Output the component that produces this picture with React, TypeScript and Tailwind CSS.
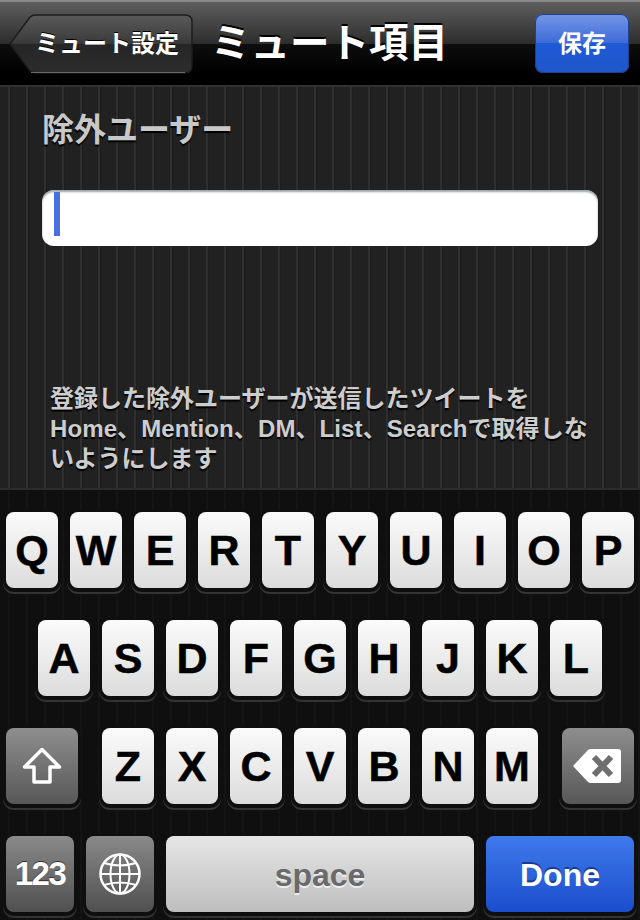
const jp = "font-['Liberation_Sans','Noto_Sans_CJK_JP',sans-serif]";

const rows = [
  { letters: ["Q", "W", "E", "R", "T", "Y", "U", "I", "O", "P"], className: "pl-[6px]" },
  { letters: ["A", "S", "D", "F", "G", "H", "J", "K", "L"], className: "pl-[38px]" },
];

const ledge = "shadow-[0_1px_0_3px_#0f0f0f,0_3px_0_3px_#343434]";

const LetterKey = ({ letter }: { letter: string }) => (
  <div
    className={`flex h-[76px] w-[52px] items-center justify-center rounded-[8px] bg-gradient-to-b from-[#fbfbfb] to-[#dcdcdc] text-[43px] font-bold text-black [-webkit-text-stroke:0.5px_#000] ${ledge}`}
  >
    {letter}
  </div>
);

const BackShape = () => (
  <svg className="absolute inset-0" width="184" height="60" viewBox="0 0 184 60">
    <defs>
      <linearGradient id="back" x1="0" y1="0" x2="0" y2="1">
        <stop offset="0" stopColor="#5a5a5a" />
        <stop offset="0.49" stopColor="#3a3a3a" />
        <stop offset="0.5" stopColor="#262626" />
        <stop offset="1" stopColor="#2c2c2c" />
      </linearGradient>
    </defs>
    <path
      d="M1 30 L21 3 Q23 1 27 1 L176 1 Q183 1 183 8 L183 52 Q183 59 176 59 L27 59 Q23 59 21 57 Z"
      fill="url(#back)"
      stroke="#1c1c1c"
      strokeWidth="1.5"
    />
    <path d="M22 58.5 L176 58.5" stroke="#6a6a6a" strokeWidth="1" />
  </svg>
);

const ShiftIcon = () => (
  <svg width="40" height="38" viewBox="0 0 40 38" fill="none">
    <path
      d="M20 2.5 L37.5 20 L28 20 L28 35 L12 35 L12 20 L2.5 20 Z"
      stroke="#fff"
      strokeWidth="3.5"
      strokeLinejoin="round"
    />
  </svg>
);

const DeleteIcon = () => (
  <svg width="48" height="34" viewBox="0 0 48 34">
    <path d="M0 17 L15 1 Q16 0 18 0 L45 0 Q48 0 48 3 L48 31 Q48 34 45 34 L18 34 Q16 34 15 33 Z" fill="#fff" />
    <path d="M21 8 L38 26 M38 8 L21 26" stroke="#6f6f6f" strokeWidth="6" />
  </svg>
);

const GlobeIcon = () => (
  <svg width="42" height="42" viewBox="0 0 42 42" fill="none" stroke="#fff" strokeWidth="2">
    <circle cx="21" cy="21" r="19.5" strokeWidth="2.5" />
    <ellipse cx="21" cy="21" rx="9.5" ry="19.5" />
    <path d="M21 1.5 V40.5 M1.5 21 H40.5" />
    <path d="M5 10 Q21 15 37 10 M5 32 Q21 27 37 32" />
  </svg>
);

const App = () => {
  return (
    <div className={`flex h-[920px] w-[640px] flex-col overflow-hidden bg-black ${jp}`}>
      {/* nav bar */}
      <div className="flex h-[87px] shrink-0 items-center border-b-2 border-[#333] border-t-2 border-t-[#8a8a8a] bg-[linear-gradient(to_bottom,#5e5e5e_0%,#2d2d2d_50%,#0e0e0e_50%,#000_85%)] pl-[9px] pr-[11px]">
        <div className="relative h-[60px] w-[184px] shrink-0">
          <BackShape />
          <div className="relative flex h-full items-center pl-[26px] text-[24px] font-bold whitespace-nowrap text-white [text-shadow:0_-1px_0_#000]">
            ミュート設定
          </div>
        </div>
        <div className="ml-[18px] text-[39.5px] leading-none font-bold whitespace-nowrap text-white [text-shadow:0_-2px_0_#000]">
          ミュート項目
        </div>
        <div className="ml-auto flex h-[59px] w-[94px] items-center justify-center rounded-[8px] bg-[linear-gradient(to_bottom,#7596e6_0%,#3d6ad8_50%,#1f5ad6_50%,#2056c8_100%)] text-[24px] font-bold text-white shadow-[inset_0_0_0_1px_#1d3f8f]">
          保存
        </div>
      </div>

      {/* form */}
      <div className="flex min-h-0 flex-1 flex-col bg-[#212121] bg-[repeating-linear-gradient(to_right,#212121_0px,#212121_8px,#2f2f2f_8px,#2f2f2f_10px,#1d1d1d_10px,#1d1d1d_11px,#212121_11px,#212121_18px)] pb-[14px]">
        <div className="mt-[25px] ml-[42px] text-[32px] leading-[36px] font-bold text-[#c8c8c8] [text-shadow:0_2px_1px_#000]">
          除外ユーザー
        </div>
        <div className="mt-[42px] ml-[42px] flex h-[56px] w-[556px] items-start rounded-[12px] bg-white pt-[2px] pl-[12px] shadow-[inset_0_2px_2px_#9aa4aa]">
          <div className="h-[44px] w-[6px] bg-[#4a6fe0]" />
        </div>
        <div className="mt-auto ml-[50px] w-[560px] text-[24px] leading-[30px] font-bold text-[#cdcdcd] [text-shadow:0_2px_1px_#000]">
          登録した除外ユーザーが送信したツイートを
          <br />
          <span className="tracking-[0.1px]">Home、Mention、DM、List、Searchで取得しな</span>
          <br />
          いようにします
        </div>
      </div>

      {/* keyboard */}
      <div className="flex h-[432px] shrink-0 flex-col gap-[32px] border-t-2 border-[#2c2c2c] bg-[#0f0f0f] bg-[repeating-linear-gradient(to_right,#0f0f0f_0px,#0f0f0f_8px,#141414_8px,#141414_10px,#0f0f0f_10px,#0f0f0f_18px)] pt-[22px]">
        {rows.map((row) => (
          <div key={row.letters[0]} className={`flex gap-[12px] ${row.className}`}>
            {row.letters.map((l) => (
              <LetterKey key={l} letter={l} />
            ))}
          </div>
        ))}
        <div className="flex gap-[12px] pl-[6px]">
          <div className={`mr-[12px] flex h-[76px] w-[72px] items-center justify-center rounded-[8px] bg-gradient-to-b from-[#8e8e8e] to-[#585858] ${ledge}`}>
            <ShiftIcon />
          </div>
          {["Z", "X", "C", "V", "B", "N", "M"].map((l) => (
            <LetterKey key={l} letter={l} />
          ))}
          <div className={`ml-[12px] flex h-[76px] w-[72px] items-center justify-center rounded-[8px] bg-gradient-to-b from-[#8e8e8e] to-[#585858] pr-[2px] ${ledge}`}>
            <DeleteIcon />
          </div>
        </div>
        <div className="flex gap-[12px] pl-[6px]">
          <div className={`flex h-[76px] w-[68px] items-center justify-center rounded-[8px] bg-gradient-to-b from-[#8a8a8a] to-[#505050] text-[33px] font-bold tracking-[-1.5px] text-white [text-shadow:0_-1px_0_#333] ${ledge}`}>
            123
          </div>
          <div className={`flex h-[76px] w-[68px] items-center justify-center rounded-[8px] bg-gradient-to-b from-[#8a8a8a] to-[#505050] ${ledge}`}>
            <GlobeIcon />
          </div>
          <div className={`flex h-[76px] w-[308px] items-center justify-center rounded-[8px] bg-gradient-to-b from-[#e6e6e6] to-[#bebebe] pt-[2px] text-[32px] font-bold text-[#6a6a6a] [text-shadow:0_2px_0_#eee] ${ledge}`}>
            space
          </div>
          <div className={`flex h-[76px] w-[148px] items-center justify-center rounded-[8px] bg-gradient-to-b from-[#4079ea] to-[#1b4dcd] pt-[2px] text-[32px] font-bold text-white [text-shadow:0_-2px_0_#173b8f] ${ledge}`}>
            Done
          </div>
        </div>
      </div>
    </div>
  );
};

export default App;
